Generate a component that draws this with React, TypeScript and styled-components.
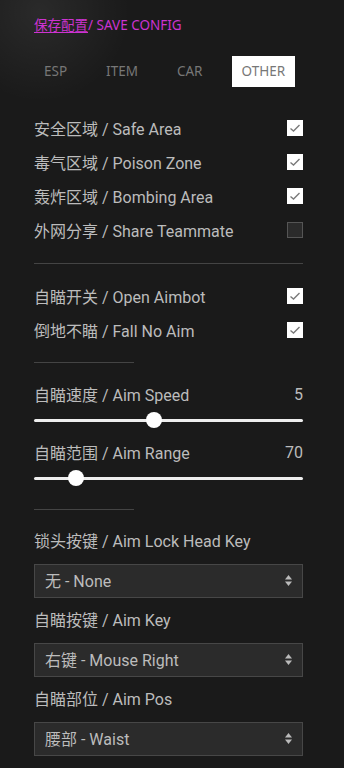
import React, { useState } from "react";
import styled, { createGlobalStyle } from "styled-components";

const GlobalStyle = createGlobalStyle`
  html, body {
    margin: 0;
    padding: 0;
    background: #1a1a1a;
  }
  * {
    box-sizing: border-box;
  }
`;

const font = `Roboto, "Noto Sans CJK SC", sans-serif`;

const Page = styled.div`
  min-height: 768px;
  padding: 14px 41px 0 34px;
  background: radial-gradient(circle at 40px 12px, rgba(255, 255, 255, 0.07), rgba(255, 255, 255, 0) 90px), #1a1a1a;
  font-family: ${font};
  color: #bcbcbc;
`;

const SaveLink = styled.div`
  height: 22px;
  line-height: 22px;
  font-family: "Noto Sans", "Noto Sans CJK SC", sans-serif;
  font-size: 13.5px;
  color: #cc33d0;
  cursor: pointer;

  span {
    text-decoration: underline;
    text-underline-offset: 2px;
  }
`;

const Tabs = styled.div`
  display: flex;
  gap: 19px;
  margin-top: 20px;
`;

const Tab = styled.div<{ $active?: boolean }>`
  height: 31px;
  line-height: 31px;
  padding: 0 10px;
  font-family: "Noto Sans", sans-serif;
  font-size: 13.5px;
  color: #777;
  background: ${(p) => (p.$active ? "#fff" : "transparent")};
  cursor: pointer;
`;

const Section = styled.div`
  margin-top: 24px;
`;

const CheckRow = styled.label`
  display: flex;
  align-items: center;
  justify-content: space-between;
  height: 34px;
  font-size: 16px;
`;

const Box = styled.span<{ $on: boolean }>`
  width: 16px;
  height: 16px;
  display: flex;
  align-items: center;
  justify-content: center;
  background: ${(p) => (p.$on ? "#fff" : "#2b2b2b")};
  border: 1px solid ${(p) => (p.$on ? "#fff" : "#555")};
`;

const Divider = styled.div<{ $short?: boolean }>`
  width: ${(p) => (p.$short ? "100px" : "100%")};
  height: 1px;
  background: #444;
  margin: ${(p) => (p.$short ? "15px" : "16px")} 0 15px;
`;

const SliderGroup = styled.div`
  display: flex;
  flex-direction: column;
  gap: 8px;
  margin-bottom: 23px;
`;

const SliderItem = styled.div`
  display: flex;
  flex-direction: column;
`;

const SliderHead = styled.div`
  display: flex;
  justify-content: space-between;
  align-items: center;
  height: 32px;
  font-size: 16px;
`;

const Range = styled.input`
  -webkit-appearance: none;
  appearance: none;
  display: block;
  width: 100%;
  height: 16px;
  margin: 2px 0 0;
  background: transparent;

  &::-webkit-slider-runnable-track {
    height: 3px;
    background: #eee;
    border-radius: 2px;
  }
  &::-webkit-slider-thumb {
    -webkit-appearance: none;
    width: 16px;
    height: 16px;
    margin-top: -6.5px;
    border-radius: 50%;
    background: #fff;
  }
`;

const FieldLabel = styled.div`
  height: 34px;
  line-height: 34px;
  font-size: 16px;
  margin-bottom: 5px;
`;

const SelectWrap = styled.div`
  position: relative;
  height: 34px;
  margin-bottom: 6px;
`;

const Select = styled.select`
  -webkit-appearance: none;
  appearance: none;
  width: 100%;
  height: 34px;
  padding: 0 30px 0 10px;
  background: #2b2b2b;
  border: 1px solid #474747;
  border-radius: 0;
  color: #bcbcbc;
  font-family: ${font};
  font-size: 16px;
  outline: none;
`;

const Arrows = styled.svg`
  position: absolute;
  right: 11px;
  top: 11px;
  pointer-events: none;
`;

const Check = () => (
  <svg width="12" height="10" viewBox="0 0 12 10">
    <polyline points="1.5,5.5 4.5,8 10.5,2" fill="none" stroke="#7a7a7a" strokeWidth="1.4" />
  </svg>
);

const Toggle: React.FC<{ label: string; initial: boolean }> = ({ label, initial }) => {
  const [on, setOn] = useState(initial);
  return (
    <CheckRow onClick={() => setOn(!on)}>
      {label}
      <Box $on={on}>{on && <Check />}</Box>
    </CheckRow>
  );
};

const Slider: React.FC<{ label: string; min: number; max: number; initial: number }> = ({ label, min, max, initial }) => {
  const [v, setV] = useState(initial);
  return (
    <SliderItem>
      <SliderHead>
        <span>{label}</span>
        <span>{v}</span>
      </SliderHead>
      <Range type="range" min={min} max={max} value={v} onChange={(e) => setV(Number(e.target.value))} />
    </SliderItem>
  );
};

const Dropdown: React.FC<{ label: string; options: string[] }> = ({ label, options }) => (
  <>
    <FieldLabel>{label}</FieldLabel>
    <SelectWrap>
      <Select defaultValue={options[0]}>
        {options.map((o) => (
          <option key={o}>{o}</option>
        ))}
      </Select>
      <Arrows width="7" height="11" viewBox="0 0 7 11">
        <polygon points="3.5,0 7,4.5 0,4.5" fill="#bbb" />
        <polygon points="0,6.5 7,6.5 3.5,11" fill="#bbb" />
      </Arrows>
    </SelectWrap>
  </>
);

export default function App() {
  const [tab, setTab] = useState("OTHER");
  return (
    <>
      <GlobalStyle />
      <Page>
        <SaveLink>
          <span>保存配置</span>/ SAVE CONFIG
        </SaveLink>
        <Tabs>
          {["ESP", "ITEM", "CAR", "OTHER"].map((t) => (
            <Tab key={t} $active={tab === t} onClick={() => setTab(t)}>
              {t}
            </Tab>
          ))}
        </Tabs>
        <Section>
          <Toggle label="安全区域 / Safe Area" initial />
          <Toggle label="毒气区域 / Poison Zone" initial />
          <Toggle label="轰炸区域 / Bombing Area" initial />
          <Toggle label="外网分享 / Share Teammate" initial={false} />
        </Section>
        <Divider />
        <Toggle label="自瞄开关 / Open Aimbot" initial />
        <Toggle label="倒地不瞄 / Fall No Aim" initial />
        <Divider $short />
        <SliderGroup>
          <Slider label="自瞄速度 / Aim Speed" min={1} max={10} initial={5} />
          <Slider label="自瞄范围 / Aim Range" min={50} max={200} initial={70} />
        </SliderGroup>
        <Divider $short />
        <Dropdown label="锁头按键 / Aim Lock Head Key" options={["无 - None", "左键 - Mouse Left", "右键 - Mouse Right"]} />
        <Dropdown label="自瞄按键 / Aim Key" options={["右键 - Mouse Right", "左键 - Mouse Left", "无 - None"]} />
        <Dropdown label="自瞄部位 / Aim Pos" options={["腰部 - Waist", "头部 - Head", "胸部 - Chest"]} />
      </Page>
    </>
  );
}
